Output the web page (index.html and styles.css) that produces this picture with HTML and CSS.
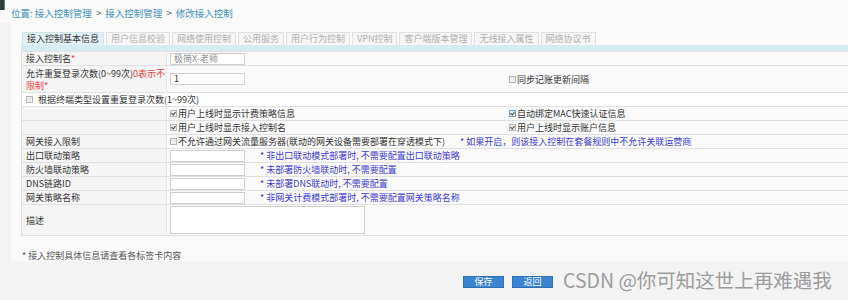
FILE: index.html
```html
<!DOCTYPE html>
<html lang="zh-CN">
<head>
    <meta charset="UTF-8">
    <title>修改接入控制</title>
    <link rel="stylesheet" href="styles.css">
</head>
<body>

    <div class="topbar">
        <div class="corner"></div>
        <div class="crumb">位置: 接入控制管理 <b>&gt;</b> 接入控制管理 <b>&gt;</b> 修改接入控制</div>
    </div>

    <div class="panel">
        <ul class="tabs">
            <li class="active">接入控制基本信息</li>
            <li>用户信息校验</li>
            <li>网络使用控制</li>
            <li>公用服务</li>
            <li>用户行为控制</li>
            <li>VPN控制</li>
            <li>客户端版本管理</li>
            <li>无线接入属性</li>
            <li>网络协议书</li>
        </ul>
        <div class="band"></div>

        <div class="form">
            <div class="row">
                <div class="lbl">接入控制名<span class="red">*</span></div>
                <div class="cell"><span class="field muted">极简X-老师</span></div>
                <div class="cell"></div>
            </div>
            <div class="row tall">
                <div class="lbl">允许重复登录次数(0~99次)<span class="red">0表示不<br>限制*</span></div>
                <div class="cell"><span class="field">1</span></div>
                <div class="cell"><span class="cb"></span>同步记账更新间隔</div>
            </div>
            <div class="row white">
                <div class="cell full"><span class="cb"></span>根据终端类型设置重复登录次数(1~99次)</div>
            </div>
            <div class="row">
                <div class="lbl"></div>
                <div class="cell"><span class="cb on"></span>用户上线时显示计费策略信息</div>
                <div class="cell"><span class="cb on focus"></span>自动绑定MAC快速认证信息</div>
            </div>
            <div class="row">
                <div class="lbl"></div>
                <div class="cell"><span class="cb on"></span>用户上线时显示接入控制名</div>
                <div class="cell"><span class="cb on"></span>用户上线时显示账户信息</div>
            </div>
            <div class="row">
                <div class="lbl">网关接入限制</div>
                <div class="cell wide">
                    <span class="opt"><span class="cb"></span>不允许通过网关流量服务器(联动的网关设备需要部署在穿透模式下)</span>
                    <span class="note">* 如果开启，则该接入控制在套餐规则中不允许关联运营商</span>
                </div>
            </div>
            <div class="row">
                <div class="lbl">出口联动策略</div>
                <div class="cell wide"><span class="field"></span><span class="note gap">* 非出口联动模式部署时, 不需要配置出口联动策略</span></div>
            </div>
            <div class="row">
                <div class="lbl">防火墙联动策略</div>
                <div class="cell wide"><span class="field"></span><span class="note gap">* 未部署防火墙联动时, 不需要配置</span></div>
            </div>
            <div class="row">
                <div class="lbl">DNS链路ID</div>
                <div class="cell wide"><span class="field"></span><span class="note gap">* 未部署DNS联动时, 不需要配置</span></div>
            </div>
            <div class="row">
                <div class="lbl">网关策略名称</div>
                <div class="cell wide"><span class="field"></span><span class="note gap">* 非网关计费模式部署时, 不需要配置网关策略名称</span></div>
            </div>
            <div class="row desc">
                <div class="lbl">描述</div>
                <div class="cell wide"><span class="area"></span></div>
            </div>
        </div>

        <p class="hint">* 接入控制具体信息请查看各标签卡内容</p>
    </div>

    <div class="footer">
        <button class="btn">保存</button>
        <button class="btn">返回</button>
        <span class="mark">CSDN @你可知这世上再难遇我</span>
    </div>

</body>
</html>
```

FILE: styles.css
```css
/* General */
body {
    margin: 0;
    background: #f3f3f3;
    color: #333;
    font-family: "Noto Sans CJK SC", "Noto Sans", sans-serif;
    font-size: 9px;
}

/* Breadcrumb */
.topbar {
    display: flex;
    align-items: flex-start;
    height: 22px;
    background: #fafafa;
}

.corner {
    width: 4px;
    height: 10px;
    background: #2f3d39;
    border-right: 1px solid #4c8a63;
}

.crumb {
    margin: 7px 0 0 6px;
    font-size: 9.5px;
    line-height: 12px;
    color: #3f90bb;
}

.crumb b {
    font-weight: normal;
    color: #555;
    margin: 0 2px;
}

/* Panel */
.panel {
    margin-left: 11px;
    padding: 10px 0 0 10px;
    height: 229px;
    background: #fafafa;
}

/* Tabs */
.tabs {
    display: flex;
    gap: 2px;
    list-style: none;
    margin: 0 0 0 1px;
    padding: 0;
}

.tabs li {
    height: 12px;
    line-height: 12px;
    padding: 0 4px;
    border: 1px solid #e0e0e0;
    border-bottom: none;
    background: #f6f6f6;
    color: #b0b0b0;
}

.tabs li.active {
    padding: 0 4px;
    background: #e2f0f5;
    color: #333;
    border-color: #d0e4ea;
}

.band {
    height: 6px;
    background: #d5ecf3;
    border-bottom: 1px solid #e2e2e2;
}

/* Form rows */
.row {
    display: grid;
    grid-template-columns: 146px 339px 1fr;
    height: 13px;
    border-bottom: 1px solid #e0e0e0;
    line-height: 13px;
}

.row.tall {
    height: 26px;
}

.row.white {
    background: #fff;
}

.row.desc {
    height: 30px;
}

.lbl {
    padding-left: 4px;
    border-left: 1px solid #dedede;
    border-right: 1px solid #e6e6e6;
    background: #f5f5f5;
    white-space: nowrap;
}

.tall .lbl {
    padding-top: 2px;
    line-height: 11.5px;
}

.desc .lbl {
    display: flex;
    align-items: center;
}

.cell {
    display: flex;
    align-items: center;
    padding-left: 3px;
    white-space: nowrap;
}

.cell.full {
    grid-column: 1 / 4;
    padding-left: 4px;
    border-left: 1px solid #dedede;
}

.cell.full .cb {
    margin-right: 5px;
}

.cell.wide {
    grid-column: 2 / 4;
}

.red {
    color: #f23c3c;
}

.field {
    box-sizing: border-box;
    width: 75px;
    height: 12px;
    line-height: 10px;
    padding-left: 3px;
    border: 1px solid #cfcfcf;
    background: #fff;
}

.field.muted {
    color: #888;
}

.area {
    box-sizing: border-box;
    width: 195px;
    height: 28px;
    border: 1px solid #cfcfcf;
    background: #fff;
}

.opt {
    display: flex;
    align-items: center;
    width: 290px;
}

.note {
    color: #3b3bd8;
}

.note.gap {
    margin-left: 15px;
}

/* Checkbox */
.cb {
    box-sizing: border-box;
    width: 7px;
    height: 7px;
    margin-right: 1px;
    border: 1px solid #b4b4b4;
    background: #ececec;
    position: relative;
}

.cb.on::after {
    content: "";
    position: absolute;
    left: 1px;
    top: 0;
    width: 2px;
    height: 3px;
    border-right: 1px solid #444;
    border-bottom: 1px solid #444;
    transform: rotate(40deg);
}

.cb.focus {
    border-color: #6f9fd8;
}

/* Hint */
.hint {
    margin: 14px 0 0 1px;
    line-height: 12px;
    color: #555;
}

/* Footer */
.footer {
    display: flex;
    align-items: center;
    height: 39px;
    padding-left: 463px;
}

.btn {
    width: 41px;
    height: 12px;
    margin: 2px 8px 0 0;
    padding: 0;
    border: 1px solid #2f6fb8;
    background: #3b84d2;
    color: #fff;
    font-family: inherit;
    font-size: 9px;
    line-height: 10px;
}

.mark {
    margin: 0 0 3px 2px;
    font-size: 19.5px;
    color: #9c9c9c;
    white-space: nowrap;
}
```
